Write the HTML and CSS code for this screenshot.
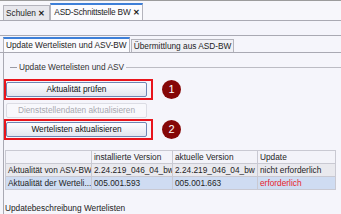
FILE: index.html
```html
<!DOCTYPE html>
<html>
<head>
<meta charset="utf-8">
<link rel="stylesheet" href="styles.css">
</head>
<body>
<div class="app">
  <div class="tabstrip">
    <div class="tab">Schulen <span class="x">✕</span></div>
    <div class="tab active">ASD-Schnittstelle BW <span class="x">✕</span></div>
  </div>
  <div class="toolbar"></div>
  <div class="subtabs">
    <div class="stab active">Update Wertelisten und ASV-BW</div>
    <div class="stab">Übermittlung aus ASD-BW</div>
  </div>
  <div class="content">
    <div class="group-title"><span class="dash"></span><span class="gt">Update Wertelisten und ASV</span><span class="gline"></span></div>
    <div class="step">
      <div class="hl"><div class="btn">Aktualität prüfen</div></div>
      <div class="num">1</div>
    </div>
    <div class="plain"><div class="btn disabled">Dienststellendaten aktualisieren</div></div>
    <div class="step second">
      <div class="hl"><div class="btn">Wertelisten aktualisieren</div></div>
      <div class="num">2</div>
    </div>
    <table class="grid">
      <tr class="head"><td></td><td>installierte Version</td><td>aktuelle Version</td><td>Update</td></tr>
      <tr class="r1"><td>Aktualität von ASV-BW</td><td>2.24.219_046_04_bw</td><td>2.24.219_046_04_bw</td><td>nicht erforderlich</td></tr>
      <tr class="r2"><td>Aktualität der Werteli...</td><td>005.001.593</td><td>005.001.663</td><td class="red">erforderlich</td></tr>
    </table>
    <div class="desc">Updatebeschreibung Wertelisten</div>
    <div class="descbox"></div>
  </div>
</div>
</body>
</html>
```
FILE: styles.css
```css
html, body { margin: 0; padding: 0; }
body { width: 341px; height: 214px; overflow: hidden; background: #f5f5fb; font-family: "Liberation Sans", Arial, sans-serif; font-size: 8.3px; color: #1e1e1e; }
.app { border-top: 1px solid #9c9c9c; }
.tabstrip { display: flex; align-items: flex-end; height: 19px; padding-left: 3px; background: #f7f7fb; border-bottom: 1px solid #a9a9b3; }
.tab { height: 14px; line-height: 14px; padding: 0 4px 0 2px; background: #e7e7ec; border: 1px solid #b4b4bc; border-bottom: none; white-space: nowrap; }
.tab .x { font-weight: bold; font-size: 8px; }
.tab.active { height: 15px; line-height: 15px; background: #fbfbfe; border-top: 2px solid #3d7fd8; padding: 0 3px 0 3px; letter-spacing: -0.2px; }
.toolbar { height: 14px; background: #f4f4fb; border-bottom: 1px solid #a9a9b3; }
.subtabs { display: flex; align-items: flex-end; height: 16px; padding-left: 3px; background: #f5f5fb; border-bottom: 1px solid #a9a9b3; }
.stab { height: 12px; line-height: 12px; padding: 0 2px; background: #f0f0f5; border: 1px solid #b4b4bc; border-bottom: none; margin-left: 1px; white-space: nowrap; }
.stab.active { margin-left: 0; height: 13px; line-height: 13px; background: #fbfbfe; border-top: 2px solid #3d7fd8; }
.content { margin-left: 3px; border-left: 1px solid #a9a9b3; height: 153px; overflow: hidden; padding-top: 8px; }
.group-title { display: flex; align-items: center; height: 12px; color: #333; }
.dash { width: 7px; border-top: 1px solid #9a9aa4; margin: 0 2px 0 6px; }
.gt { white-space: nowrap; }
.gline { flex: 1; border-top: 1px solid #bcbcc4; margin-left: 2px; }
.step { display: flex; align-items: center; margin-top: 6px; }
.step.second { margin-top: 1px; }
.hl { width: 141px; padding: 1px 4px 1px 0; border: 2px solid #e8141c; }
.plain { width: 141px; padding: 3px 4px 0 2px; }
.btn { height: 13px; line-height: 13px; text-align: center; border: 1px solid #6f86b4; border-radius: 2px; background: linear-gradient(#fdfdff, #e2e6f0); color: #111; white-space: nowrap; }
.btn.disabled { border-color: #dcdce4; background: #f8f8fc; color: #a8a8b0; }
.num { width: 19px; height: 19px; margin-left: 9px; border-radius: 50%; background: #850707; color: #fff; font-size: 11px; line-height: 19px; text-align: center; }
.grid { margin: 10px 0 0 1px; width: 331px; border-collapse: collapse; table-layout: fixed; }
.grid td { height: 12px; padding: 0 2px; border: 1px solid #c9c9d2; white-space: nowrap; overflow: hidden; line-height: 12px; }
.grid td:nth-child(1) { width: 81px; }
.grid td:nth-child(2) { width: 76px; }
.grid td:nth-child(3) { width: 80px; }
.head td { background: #f3f3f9; }
.r1 td { background: #e9e9ee; }
.r2 td { background: #cfdcf2; }
.red { color: #e8202a; }
.desc { margin-top: 13px; padding-left: 1px; color: #222; }
.descbox { margin: 3px 4px 0 1px; height: 10px; border: 1px solid #c9c9d2; background: #fafafd; }
```
